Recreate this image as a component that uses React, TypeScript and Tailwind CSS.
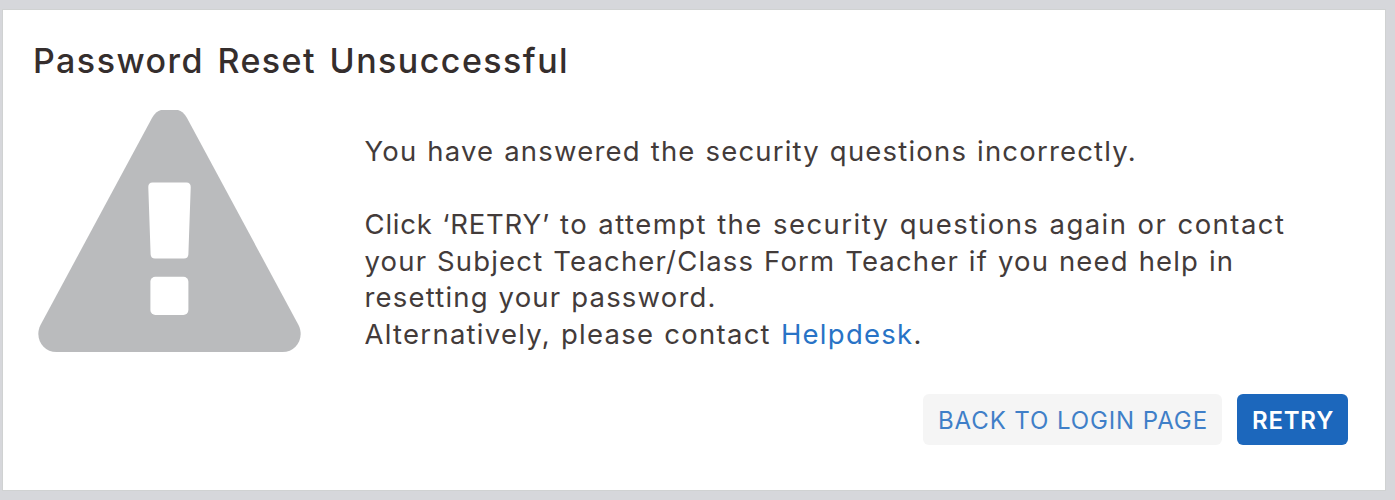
import React from 'react';

function WarningIcon() {
  return (
    <svg className="w-[263px] h-[242px] shrink-0" viewBox="0 0 263 242" aria-hidden="true">
      <path
        fill="#babbbd"
        d="M123 0H140Q145 1 149 8L260.500 215C267 228 258 242 244.500 242H18.500C5 242 -4 228 2.500 215L114 8Q118 1 123 0Z"
      />
      <path
        fill="#fff"
        d="M114.500 72.500H148.500Q152.900 72.500 152.700 77.500L150.400 144Q150.200 148.500 146 148.500H117Q112.800 148.500 112.600 144L110.300 77.500Q110.100 72.500 114.500 72.500Z"
      />
      <rect x="112.400" y="166.700" width="38" height="38.300" rx="5" fill="#fff" />
    </svg>
  );
}

export default function App() {
  return (
    <div className="h-[500px] w-[1395px] bg-[#d6d7db] pt-[9px] pl-[2px] font-['Inter',sans-serif] text-[#433b3a]">
      <div className="h-[482px] w-[1384px] border border-[#d0d2d2] bg-white pt-[29px] pl-[30px] pr-[37px]">
        <h1 className="h-[44px] whitespace-nowrap text-[34px] leading-[44px] font-medium tracking-[1.450px] text-[#352e2d] [word-spacing:3px]">
          Password Reset Unsuccessful
        </h1>

        <div className="mt-[27px] flex pl-[5px]">
          <WarningIcon />
          <div className="ml-[63.500px] mt-[22.800px] whitespace-nowrap text-[27.500px] leading-[36.600px] [word-spacing:1px]">
            <p className="tracking-[1.190px]">You have answered the security questions incorrectly.</p>
            <p className="mt-[36.600px]">
              <span className="block tracking-[1.450px]">
                <span className="tracking-[0.800px]">Click ‘RETRY’</span> to attempt the security questions again or contact
              </span>
              <span className="block tracking-[1.160px]">your Subject Teacher/Class Form Teacher if you need help in</span>
              <span className="block tracking-[1.180px]">resetting your password.</span>
            </p>
            <p className="tracking-[1.260px]">
              Alternatively, please contact{' '}
              <a href="#" className="text-[#2873c6]">Helpdesk</a>.
            </p>
          </div>
        </div>

        <div className="mt-[41.600px] flex justify-end gap-[15px]">
          <button className="h-[51px] w-[299px] whitespace-nowrap rounded-md bg-[#f5f5f5] pt-[3px] pl-px text-[24px] tracking-[0.900px] text-[#3f7fc8]">
            BACK TO LOGIN PAGE
          </button>
          <button className="h-[51px] w-[111px] whitespace-nowrap rounded-md bg-[#1c67bc] pt-[3px] pl-px text-[24px] font-semibold tracking-[0.800px] text-white">
            RETRY
          </button>
        </div>
      </div>
    </div>
  );
}
